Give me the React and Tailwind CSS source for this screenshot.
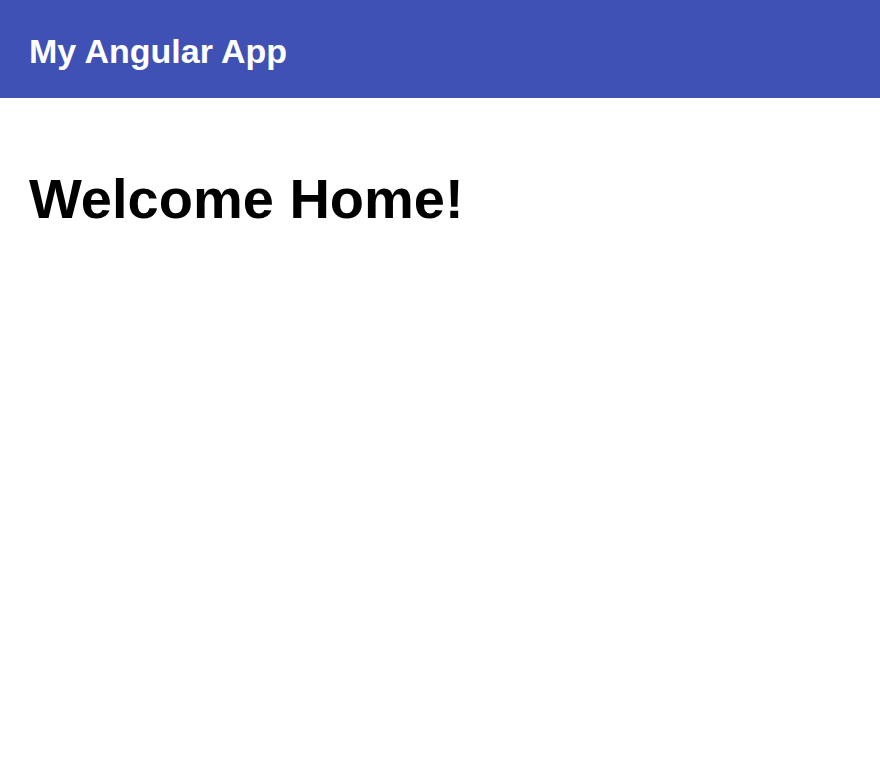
const App = () => {
  return (
    <div className="min-h-screen bg-white" style={{ fontFamily: '"Liberation Sans", Arial, sans-serif' }}>
      {/* TOOLBAR */}
      <header className="h-[98px] bg-[#3f51b5] px-[29px] pt-[34px]">
        <span className="text-[34px] leading-none font-bold text-white">My Angular App</span>
      </header>

      {/* CONTENU */}
      <main className="px-[29px] pt-[73px]">
        <h1 className="text-[56px] leading-none font-bold text-black">Welcome Home!</h1>
      </main>
    </div>
  );
};

export default App;
